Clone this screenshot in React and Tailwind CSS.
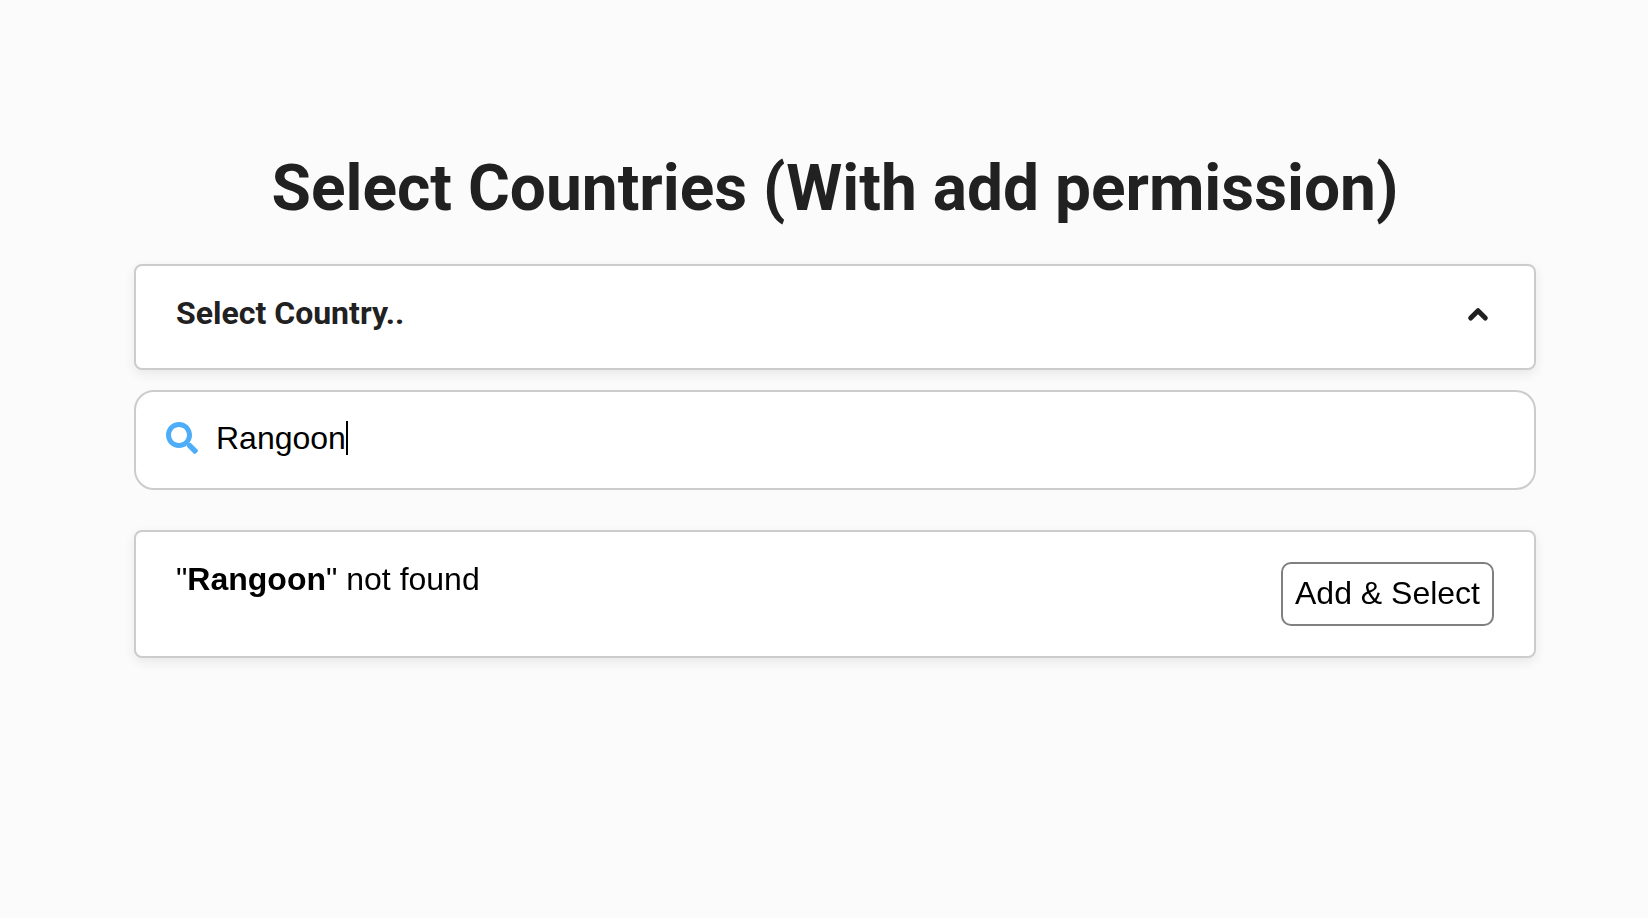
import { useState } from "react";
import { FaSearch } from "react-icons/fa";

export default function App() {
  const [query, setQuery] = useState("Rangoon");
  return (
    <main className="min-h-screen bg-[#fbfbfb] pl-[134px] pr-[112px] pt-[151px] font-['Liberation_Sans',sans-serif] text-[32px] leading-[38px] text-black">
      <h1 className="text-center font-[Roboto,sans-serif] text-[64px] font-bold leading-[76px] text-[#212121]">
        Select Countries (With add permission)
      </h1>
      <button type="button" aria-expanded="true" className="mt-[37px] flex h-[106px] w-full items-start justify-between rounded-lg border-2 border-[#cccccc] bg-white px-10 pt-7 shadow-[0_4px_12px_rgba(0,0,0,0.08)]">
        <span className="font-[Roboto,sans-serif] font-bold text-[#212121]">Select Country..</span>
        <svg className="mt-3 mr-1" width="24" height="16" viewBox="0 0 24 16" fill="none" stroke="#212121" strokeWidth="5" strokeLinecap="round" strokeLinejoin="round"><path d="M4.7 12L12 4.7l7.3 7.3" /></svg>
      </button>
      <label className="mt-5 flex h-[100px] items-center gap-[18px] rounded-[20px] border-2 border-[#cccccc] bg-white px-[30px] pb-1">
        <FaSearch className="text-[#4dadf9]" />
        <span className="flex flex-1 items-center">
          <input aria-label="Search countries" autoFocus value={query} onChange={(e) => setQuery(e.target.value)} className="field-sizing-content max-w-full caret-transparent outline-none" />
          <span aria-hidden="true" className="h-[34px] w-0.5 bg-black" />
        </span>
      </label>
      <section className="mt-10 flex h-[128px] items-start justify-between rounded-lg border-2 border-[#cccccc] bg-white px-10 pt-[30px] shadow-[0_4px_12px_rgba(0,0,0,0.08)]">
        <p className="leading-[34px]">"<b>{query}</b>" not found</p>
        <button type="button" className="h-16 rounded-[10px] border-2 border-[#808080] px-3 pb-0.5">Add &amp; Select</button>
      </section>
    </main>
  );
}
